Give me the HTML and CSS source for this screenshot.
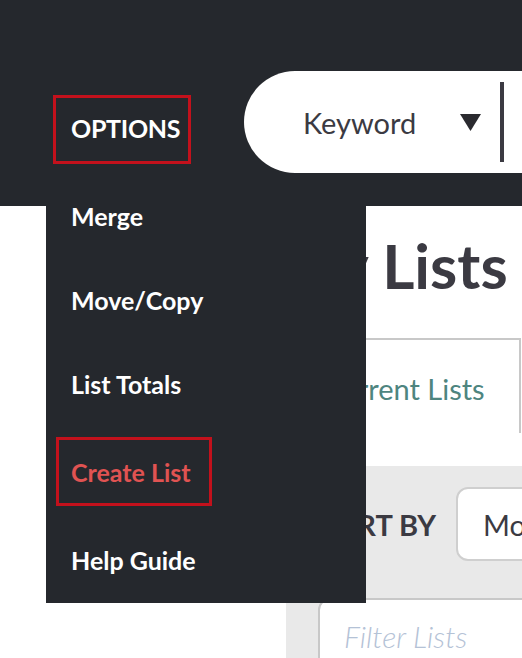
FILE: index.html
```html
<!DOCTYPE html>
<html lang="en">
<head>
  <meta charset="UTF-8">
  <meta name="viewport" content="width=device-width, initial-scale=1.0">
  <title>My Lists</title>
  <link rel="stylesheet" href="styles.css">
</head>
<body>
  <header class="topbar">
    <button class="options-toggle">OPTIONS</button>

    <div class="search-pill">
      <span class="search-type">Keyword</span>
      <svg class="caret" width="21" height="17" viewBox="0 0 21 17">
        <polygon points="0,0 21,0 10.5,17" fill="#2a2a2f" />
      </svg>
      <span class="divider"></span>
    </div>
  </header>

  <nav class="options-menu">
    <ul>
      <li><a href="#">Merge</a></li>
      <li><a href="#">Move/Copy</a></li>
      <li><a href="#">List Totals</a></li>
      <li class="is-active"><a href="#">Create List</a></li>
      <li><a href="#">Help Guide</a></li>
    </ul>
  </nav>

  <main class="page">
    <h1 class="page-title">My Lists</h1>

    <div class="tabs">
      <div class="tab is-current">Current Lists</div>
    </div>

    <section class="list-tools">
      <div class="sort-row">
        <span class="sort-label">SORT BY</span>
        <div class="sort-select">Most Recent</div>
      </div>
      <input class="filter-input" type="text" placeholder="Filter Lists" />
    </section>
  </main>
</body>
</html>
```

FILE: styles.css
```css
body {
  margin: 0;
  font-family: Lato, "Open Sans", sans-serif;
  background-color: #fff;
  color: #3b3a42;
  overflow: hidden;
  height: 658px;
}

.topbar {
  position: relative;
  z-index: 2;
  height: 206px;
  box-sizing: border-box;
  padding: 71px 0 0 53px;
  background-color: #25282d;
  display: flex;
  align-items: flex-start;
}

.options-toggle {
  flex-shrink: 0;
  margin-top: 24px;
  width: 138px;
  height: 69px;
  box-sizing: border-box;
  padding: 0 0 2px 15px;
  border: 3px solid #c3111c;
  background: none;
  color: #fff;
  font-family: inherit;
  font-size: 25px;
  font-weight: 700;
  letter-spacing: -0.3px;
  line-height: 61px;
  text-align: left;
}

.search-pill {
  margin-left: 53px;
  width: 420px;
  flex-shrink: 0;
  height: 102px;
  border-radius: 51px 0 0 51px;
  background-color: #fff;
  display: flex;
  align-items: center;
  padding-left: 59px;
  box-sizing: border-box;
}

.search-type {
  font-size: 29px;
  color: #3b3a42;
}

.caret {
  margin-left: 44px;
}

.divider {
  margin-left: 19px;
  width: 4px;
  height: 80px;
  background-color: #3b3a42;
}

/* dropdown under OPTIONS */
.options-menu {
  position: absolute;
  z-index: 1;
  left: 46px;
  top: 174px;
  width: 320px;
  height: 429px;
  background-color: #25282d;
}

.options-menu ul {
  list-style: none;
  margin: 0;
  padding: 0;
}

.options-menu a {
  display: block;
  padding-left: 25px;
  line-height: 84px;
  font-size: 25px;
  font-weight: 700;
  color: #fff;
  text-decoration: none;
}

.options-menu .is-active {
  padding: 11px 0 12px 10px;
}

.options-menu .is-active a {
  display: inline-block;
  width: 156px;
  box-sizing: border-box;
  padding: 2px 0 0 12px;
  line-height: 61px;
  border: 3px solid #c3111c;
  color: #e05352;
}

.page {
  margin-left: 286px;
}

.page-title {
  margin: 29px 0 0 -8px;
  font-size: 62px;
  line-height: 60px;
  font-weight: 700;
  color: #3b3a42;
  white-space: nowrap;
}

.tabs {
  margin-top: 43px;
  display: flex;
}

.tab {
  width: 235px;
  box-sizing: border-box;
  padding-top: 4px;
  line-height: 89px;
  border: 2px solid #c8c8c8;
  border-bottom: none;
  text-align: center;
  font-size: 29px;
  color: #4e857f;
}

.list-tools {
  margin-top: 33px;
  width: 400px;
  height: 300px;
  padding: 21px 0 0 32px;
  background-color: #e9e9e9;
}

.sort-row {
  display: flex;
  align-items: center;
}

.sort-label {
  width: 138px;
  font-size: 29px;
  font-weight: 700;
  color: #3b3a42;
  white-space: nowrap;
}

.sort-select {
  width: 260px;
  height: 74px;
  box-sizing: border-box;
  padding-left: 25px;
  border: 2px solid #cfcfcf;
  border-radius: 12px;
  background-color: #fff;
  display: flex;
  align-items: center;
  font-size: 29px;
  color: #3b3a42;
}

.filter-input {
  display: block;
  margin-top: 37px;
  width: 360px;
  height: 76px;
  box-sizing: border-box;
  padding: 0 0 0 24px;
  border: 2px solid #c8c8c8;
  border-radius: 12px;
  background-color: #fff;
  font-family: inherit;
  font-size: 30px;
  outline: none;
}

.filter-input::placeholder {
  font-style: italic;
  font-weight: 300;
  color: #b4c2d6;
}
```
